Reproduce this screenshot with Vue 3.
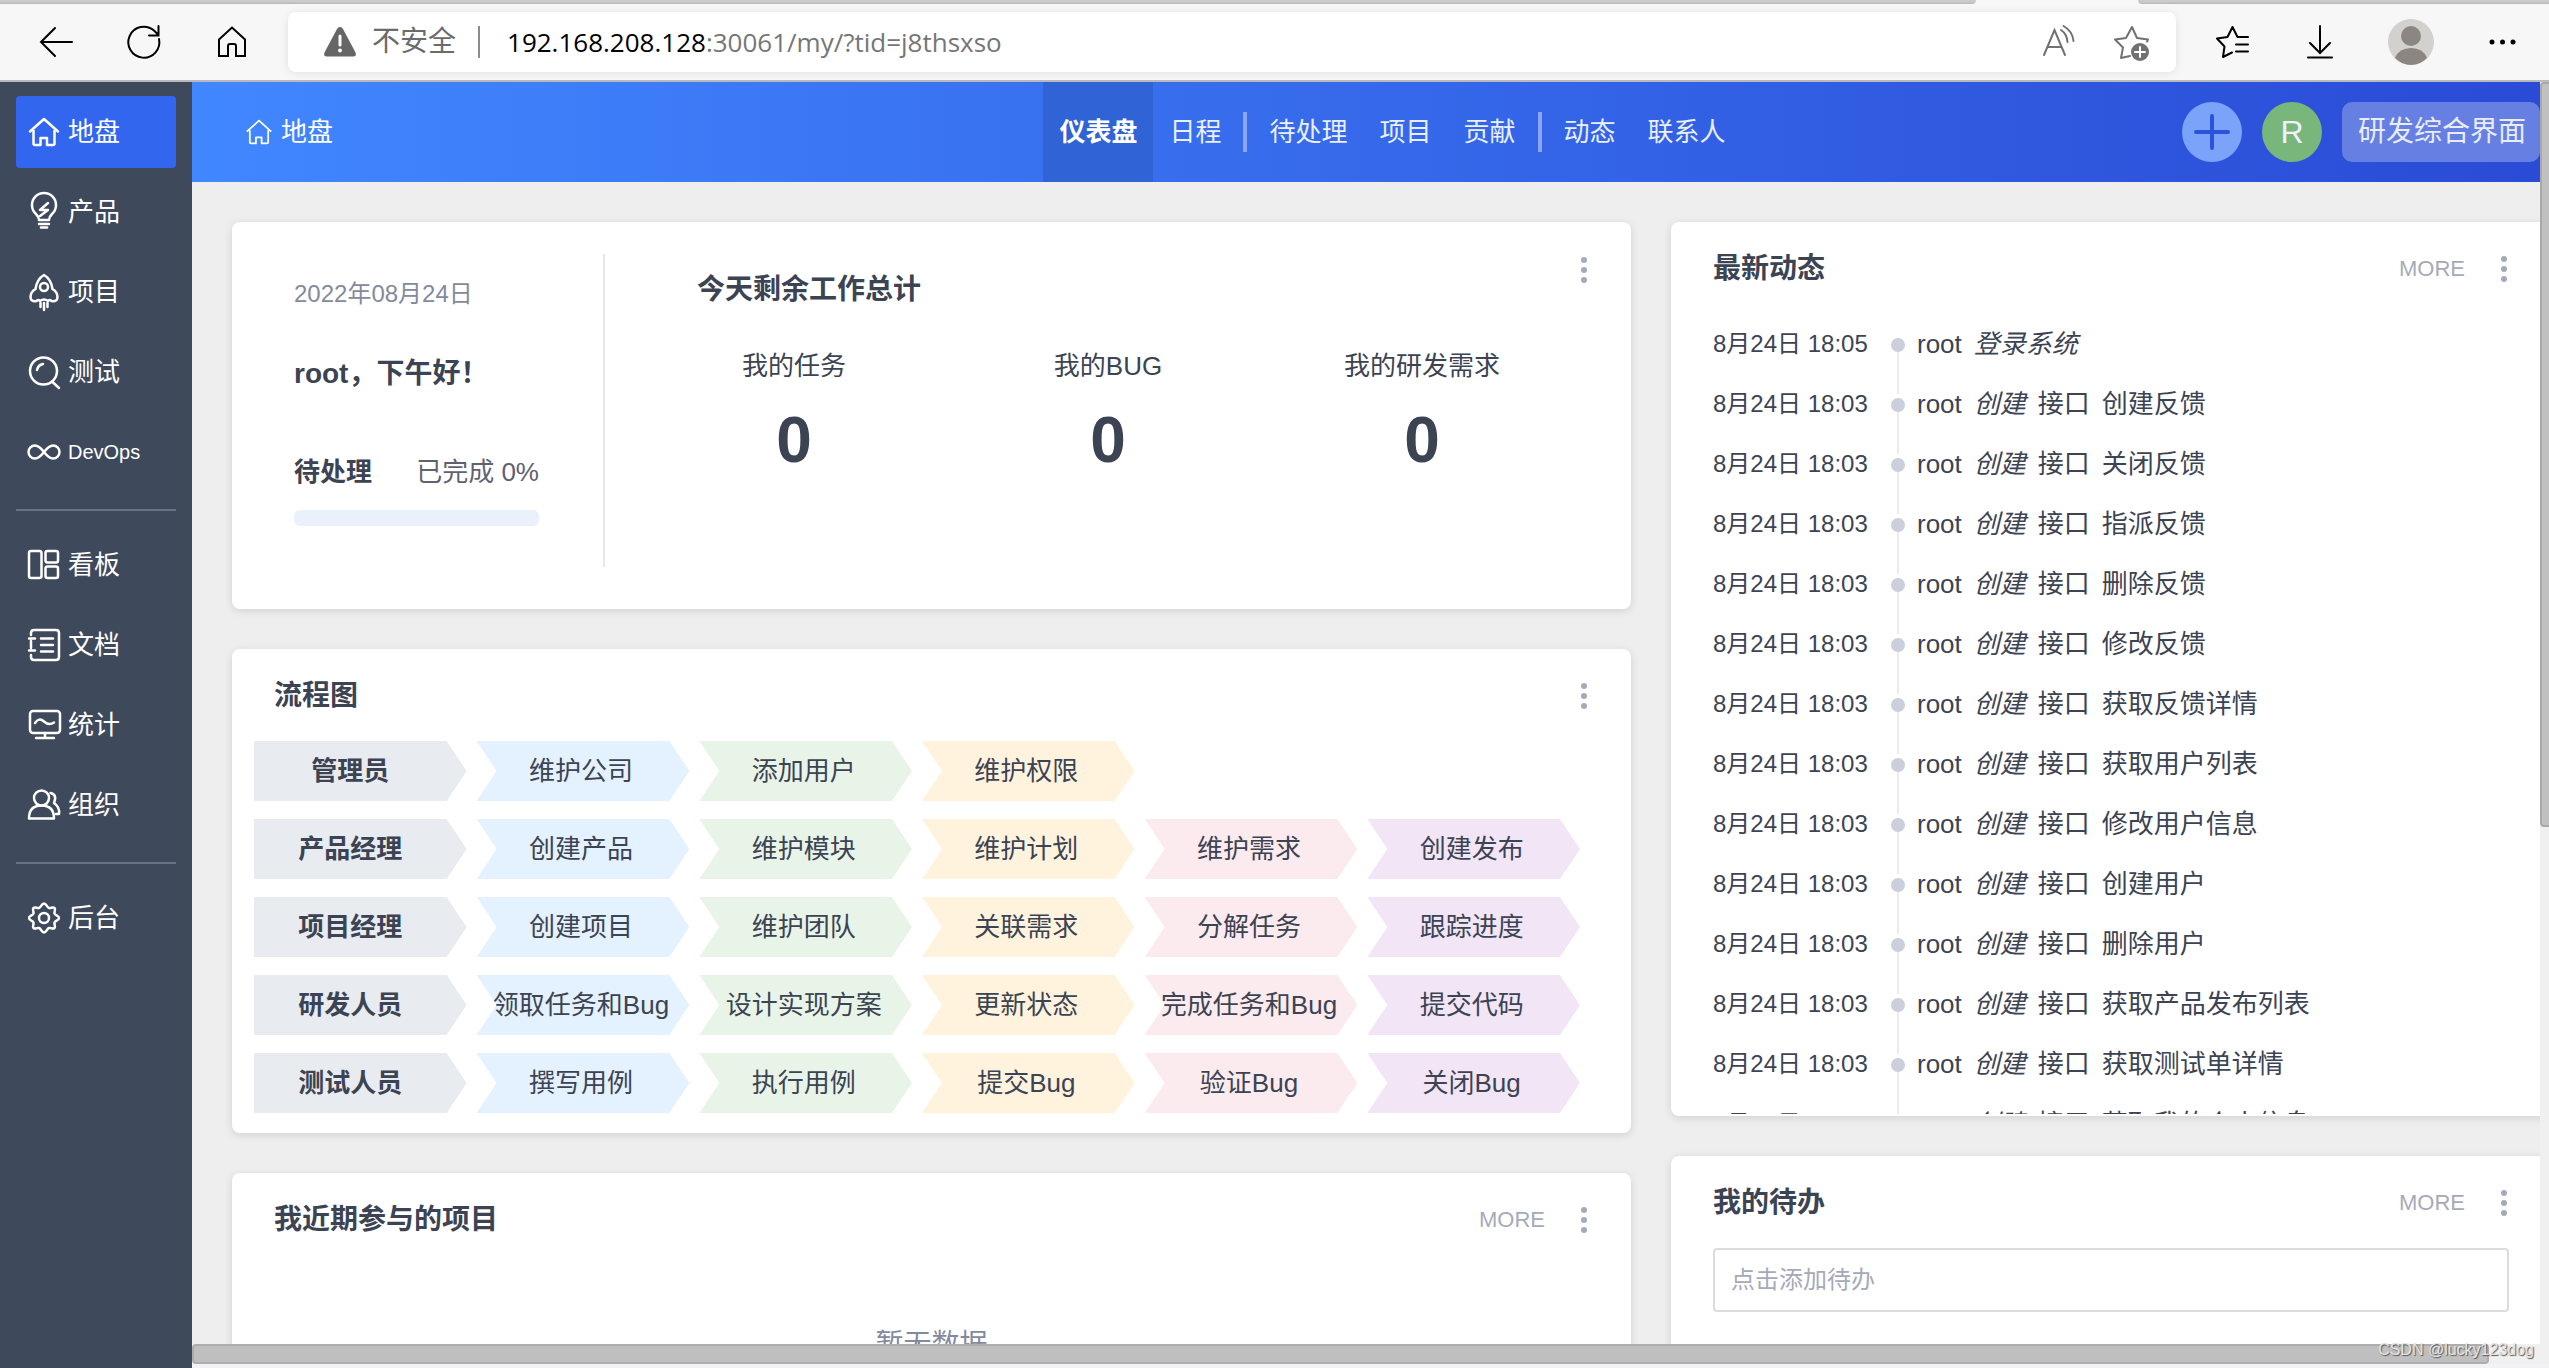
<script setup>
const primaryMenu = [
  { icon: 'home', label: '地盘', active: true },
  { icon: 'bulb', label: '产品' },
  { icon: 'rocket', label: '项目' },
  { icon: 'search', label: '测试' },
  { icon: 'infinity', label: 'DevOps', narrow: true },
]
const secondaryMenu = [
  { icon: 'kanban', label: '看板' },
  { icon: 'doc', label: '文档' },
  { icon: 'chart', label: '统计' },
  { icon: 'people', label: '组织' },
]
const adminMenu = [{ icon: 'gear', label: '后台' }]
const menuGroups = [primaryMenu, secondaryMenu, adminMenu]

const tabGroups = [
  ['仪表盘', '日程'],
  ['待处理', '项目', '贡献'],
  ['动态', '联系人'],
]

const stats = [
  { label: '我的任务', value: 0 },
  { label: '我的BUG', value: 0 },
  { label: '我的研发需求', value: 0 },
]

const flows = [
  { role: '管理员', steps: ['维护公司', '添加用户', '维护权限'] },
  { role: '产品经理', steps: ['创建产品', '维护模块', '维护计划', '维护需求', '创建发布'] },
  { role: '项目经理', steps: ['创建项目', '维护团队', '关联需求', '分解任务', '跟踪进度'] },
  { role: '研发人员', steps: ['领取任务和Bug', '设计实现方案', '更新状态', '完成任务和Bug', '提交代码'] },
  { role: '测试人员', steps: ['撰写用例', '执行用例', '提交Bug', '验证Bug', '关闭Bug'] },
]

const created = [
  '创建反馈', '关闭反馈', '指派反馈', '删除反馈', '修改反馈', '获取反馈详情', '获取用户列表',
  '修改用户信息', '创建用户', '删除用户', '获取产品发布列表', '获取测试单详情', '获取我的个人信息',
]
const feed = [
  { time: '8月24日 18:05', action: '登录系统' },
  ...created.map((target) => ({ time: '8月24日 18:03', action: '创建', type: '接口', target })),
]
</script>

<template>
  <div class="window">
    <div class="tabstrip"><i class="tab-left"></i><i></i><i class="tab-right"></i></div>

    <header class="toolbar">
      <div class="tools">
        <button class="tool" aria-label="后退">
          <svg viewBox="0 0 40 40"><path d="M36 20H5M19 6 5 20l14 14" /></svg>
        </button>
        <button class="tool" aria-label="刷新">
          <svg viewBox="0 0 40 40"><path d="M35 17a15.500 15.500 0 1 1-5-8.500l4 4M34.500 4v9.500H25" /></svg>
        </button>
        <button class="tool" aria-label="主页">
          <svg viewBox="0 0 40 40"><path d="M7 17.500 20 5.500l13 12V34h-9V24q0-2-2-2h-4q-2 0-2 2v10H7z" /></svg>
        </button>
      </div>
      <div class="address">
        <svg class="warn" viewBox="0 0 32 30"><path d="M16 0q2 0 3 2l12.500 23.500Q33 29.500 29 29.500H3q-4 0-2.500-4L13 2q1-2 3-2z" fill="#666" /><path d="M16 9v9" stroke="#fff" stroke-width="3" stroke-linecap="round" /><circle cx="16" cy="23.500" r="2" fill="#fff" /></svg>
        <span class="insecure">不安全</span>
        <i class="bar"></i>
        <span class="url"><b>192.168.208.128</b>:30061/my/?tid=j8thsxso</span>
        <button class="tool grey" aria-label="朗读">
          <svg viewBox="0 0 40 40"><path d="M4 33 14.500 8 25 33M7.500 25h14M21 8q6 4 6.500 12M23.500 4q9 5 10 15" /></svg>
        </button>
        <button class="tool grey" aria-label="收藏">
          <svg viewBox="0 0 40 40"><path d="M18 34l-9 2 2-10.500-8-8 11-1.500 6-11 5 11 11 1.500-1 2" stroke-linejoin="round" /><circle cx="28" cy="30" r="9" fill="#717171" stroke="none" /><path d="M28 25v10M23 30h10" stroke="#fff" /></svg>
        </button>
      </div>
      <div class="tools">
        <button class="tool" aria-label="收藏夹">
          <svg viewBox="0 0 40 40"><path d="M20 30.500 11 35l1.500-10.500-7.500-8L15.500 15 20.500 5l5 10H36M24 22.500h12M24 29.500h12" stroke-linejoin="round" /></svg>
        </button>
        <button class="tool" aria-label="下载">
          <svg viewBox="0 0 40 40"><path d="M20 4v26M10 21l10 10 10-10M8 35.500h24" /></svg>
        </button>
        <button class="avatar" aria-label="用户">
          <svg viewBox="0 0 46 46"><circle cx="23" cy="23" r="23" fill="#d3d1cd" /><circle cx="23" cy="17" r="10" fill="#8b8682" /><path d="M7 39q4-10 16-10t16 10q-7 7-16 7T7 39z" fill="#8b8682" /></svg>
        </button>
        <button class="tool" aria-label="更多">
          <svg viewBox="0 0 40 40"><g fill="#000" stroke="none"><circle cx="10" cy="20" r="2.500" /><circle cx="20.500" cy="20" r="2.500" /><circle cx="31" cy="20" r="2.500" /></g></svg>
        </button>
      </div>
    </header>

    <div class="body">
      <aside class="sidebar">
        <nav v-for="(group, g) in menuGroups" :key="g" class="menu">
          <a v-for="item in group" :key="item.label" href="#" class="menu-item" :class="{ active: item.active }">
            <svg class="menu-icon" viewBox="0 0 32 32">
              <path v-if="item.icon === 'home'" d="M2 15.500 16 3l14 12.500M5.500 14v13.500q0 1.500 1.500 1.500h5.500v-7h6.500v7H25q1.500 0 1.500-1.500V14" />
              <g v-else-if="item.icon === 'bulb'">
                <path d="M11 24q0-3-3-6a12 12 0 1 1 16 0q-3 3-3 6zM11 28h10" />
                <path d="M13 31.500h6" />
                <path d="m20 7-8 7h8l-8 6" />
              </g>
              <g v-else-if="item.icon === 'rocket'">
                <path d="M8.500 25q-6 1-6-4 0-5 5-8Q9 3 16-1q7 4 8.500 14 5 3 5 8 0 5-6 4-2-2-3.500 0-2-1.500-4-1.500t-4 1.500q-1.500-2-3.500 0z" />
                <circle cx="16" cy="11" r="4" />
                <path d="M12.500 27v4M16 27v7M19.500 27v4" />
              </g>
              <g v-else-if="item.icon === 'search'">
                <circle cx="15.500" cy="15" r="13.500" />
                <path d="M24 25.500 31 32M9 14q1-5 6-6" />
              </g>
              <path v-else-if="item.icon === 'infinity'" d="M16 16Q11 9.500 7 9.500a6.500 6.500 0 0 0 0 13Q11 22.500 16 16t9-6.500a6.500 6.500 0 0 1 0 13Q21 22.500 16 16z" />
              <g v-else-if="item.icon === 'kanban'">
                <rect x="1" y="2" width="12.500" height="27" rx="2" />
                <rect x="17.500" y="2" width="12.500" height="11.500" rx="2" />
                <rect x="17.500" y="17.500" width="12.500" height="11.500" rx="2" />
              </g>
              <g v-else-if="item.icon === 'doc'">
                <path d="M3 6V4q0-3 3-3h22q3 0 3 3v24q0 3-3 3H6q-3 0-3-3v-2M3 12v7M1 9.500h6M1 21.500h6M13 9.500h12M13 16h12M13 22.500h12" />
              </g>
              <g v-else-if="item.icon === 'chart'">
                <rect x="2" y="2" width="30" height="22" rx="3" />
                <path d="M7 14q4-6 9-1.500t10 1M17 24v4M8 29h18" />
              </g>
              <g v-else-if="item.icon === 'people'">
                <circle cx="13.500" cy="9" r="7.500" />
                <path d="M1 29.500q0-13 12.500-13T26 29.500zM22.500 4q7 1.500 3.500 10 6 4 5 11h-3" />
              </g>
              <g v-else>
                <path d="M16 1.500c2.500 0 3 4 5 4.500s4-1.500 5.500 0-.5 3.500 0 5.500 4.500 2 4.500 4.500-4 2.500-4.500 4.500 1.500 4 0 5.500-3.500-.5-5.500 0-2.500 4.500-5 4.500-3-4-5-4.500-4 1.500-5.500 0 .5-3.500 0-5.500S1 18.500 1 16s4-2.500 4.500-4.500-1.500-4 0-5.500 3.500.5 5.500 0 2.500-4.500 5-4.500z" />
                <circle cx="16" cy="16" r="5" />
              </g>
            </svg>
            <span :class="{ narrow: item.narrow }">{{ item.label }}</span>
          </a>
        </nav>
      </aside>

      <div class="frame">
        <div class="viewport">
          <div class="page">
            <div class="topbar">
              <div class="topbar-side">
                <a href="#" class="crumb">
                  <svg viewBox="0 0 32 32"><path d="M2 15.500 16 3l14 12.500M5.500 14v13.500q0 1.500 1.500 1.500h5.500v-7h6.500v7H25q1.500 0 1.500-1.500V14" /></svg>地盘
                </a>
              </div>
              <nav class="tabs">
                <div v-for="(group, g) in tabGroups" :key="g" class="tab-group">
                  <a v-for="tab in group" :key="tab" href="#" :class="{ current: tab === '仪表盘' }">{{ tab }}</a>
                </div>
              </nav>
              <div class="topbar-side actions">
                <button class="round plus" aria-label="添加">
                  <svg viewBox="0 0 60 60"><path d="M30 14v32M14 30h32" /></svg>
                </button>
                <button class="round user">R</button>
                <button class="mode">研发综合界面</button>
              </div>
            </div>

            <main class="board">
              <div class="column">
                <section class="card welcome">
                  <div class="greeting">
                    <time>2022年08月24日</time>
                    <h2>root，下午好！</h2>
                    <p><b>待处理</b><span>已完成 0%</span></p>
                    <div class="progress"></div>
                  </div>
                  <div class="summary">
                    <div class="summary-head">
                      <h2>今天剩余工作总计</h2>
                      <button class="dots" aria-label="菜单"><i></i><i></i><i></i></button>
                    </div>
                    <div class="stats">
                      <div v-for="s in stats" :key="s.label">
                        <span>{{ s.label }}</span>
                        <strong>{{ s.value }}</strong>
                      </div>
                    </div>
                  </div>
                </section>

                <section class="card">
                  <div class="card-head">
                    <h2>流程图</h2>
                    <button class="dots" aria-label="菜单"><i></i><i></i><i></i></button>
                  </div>
                  <div class="flow">
                    <div v-for="row in flows" :key="row.role" class="flow-row">
                      <b class="step role">{{ row.role }}</b>
                      <a v-for="(step, i) in row.steps" :key="step" href="#" class="step" :class="'tone-' + i">{{ step }}</a>
                    </div>
                  </div>
                </section>

                <section class="card">
                  <div class="card-head">
                    <h2>我近期参与的项目</h2>
                    <a href="#" class="more">MORE</a>
                    <button class="dots" aria-label="菜单"><i></i><i></i><i></i></button>
                  </div>
                  <p class="empty">暂无数据</p>
                </section>
              </div>

              <div class="column">
                <section class="card">
                  <div class="card-head">
                    <h2>最新动态</h2>
                    <a href="#" class="more">MORE</a>
                    <button class="dots" aria-label="菜单"><i></i><i></i><i></i></button>
                  </div>
                  <ul class="feed">
                    <li v-for="(f, i) in feed" :key="i">
                      <time>{{ f.time }}</time>
                      <i class="node"></i>
                      <span>root</span>
                      <em>{{ f.action }}</em>
                      <span v-if="f.type">{{ f.type }}</span>
                      <a v-if="f.target" href="#">{{ f.target }}</a>
                    </li>
                  </ul>
                </section>

                <section class="card">
                  <div class="card-head">
                    <h2>我的待办</h2>
                    <a href="#" class="more">MORE</a>
                    <button class="dots" aria-label="菜单"><i></i><i></i><i></i></button>
                  </div>
                  <div class="todo">
                    <input type="text" placeholder="点击添加待办" aria-label="添加待办" />
                  </div>
                </section>
              </div>
            </main>
          </div>
          <div class="vscroll"><i></i></div>
        </div>
        <div class="hscroll"><i></i></div>
      </div>
    </div>
    <span class="watermark">CSDN @lucky123dog</span>
  </div>
</template>

<style>
html,
body {
  margin: 0;
  overflow: hidden;
}
</style>

<style scoped>
* {
  box-sizing: border-box;
}
.window {
  position: relative;
  display: flex;
  flex-direction: column;
  height: 100vh;
  overflow: hidden;
  font-family: "Liberation Sans", "Noto Sans CJK SC", sans-serif;
  font-size: 26px;
  line-height: 40px;
  color: #3c4353;
  background: #f7f7f7;
}
a {
  color: inherit;
  text-decoration: none;
}
button {
  padding: 0;
  border: 0;
  background: none;
  font: inherit;
  color: inherit;
}
h2,
p,
ul {
  margin: 0;
  padding: 0;
}
h2 {
  font-size: 28px;
  font-weight: 700;
}
svg {
  display: block;
  overflow: visible;
  fill: none;
}

/* browser chrome */
.tabstrip {
  display: grid;
  grid-template-columns: 1976fr 162fr 411fr;
  height: 4px;
  flex: none;
}
.tab-left,
.tab-right {
  background: linear-gradient(#cbcbcb 50%, #b4b4b4);
}
.tab-left {
  border-bottom-right-radius: 4px;
}
.tab-right {
  border-bottom-left-radius: 4px;
}
.toolbar {
  display: flex;
  align-items: center;
  flex: none;
  gap: 36px;
  height: 78px;
  padding: 0 27px 0 36px;
  border-bottom: 2px solid #b9babd;
}
.tools {
  display: flex;
  align-items: center;
  gap: 48px;
}
.tool {
  width: 40px;
  height: 40px;
}
.tool svg {
  stroke: #000;
  stroke-width: 2;
  stroke-linecap: round;
}
.tool.grey svg {
  stroke: #717171;
}
.avatar {
  width: 46px;
  height: 46px;
}
.address {
  display: flex;
  align-items: center;
  flex: 1;
  height: 60px;
  padding: 0 24px 0 36px;
  border-radius: 8px;
  background: #fff;
  box-shadow: 0 1px 10px rgba(0, 0, 0, 0.09);
}
.warn {
  width: 32px;
  height: 30px;
}
.insecure {
  margin: 0 22px 0 16px;
  font-size: 28px;
  color: #6b6b6b;
}
.bar {
  width: 2px;
  height: 32px;
  background: #8c8c8c;
}
.url {
  flex: 1;
  margin-left: 27px;
  font-family: "Open Sans", sans-serif;
  font-size: 26px;
  color: #767676;
}
.url b {
  font-weight: 400;
  color: #000;
}
.address .tool + .tool {
  margin-left: 32px;
}

/* sidebar */
.body {
  display: flex;
  flex: 1;
  min-height: 0;
}
.sidebar {
  flex: none;
  width: 192px;
  padding: 14px 16px;
  background: #3f495c;
}
.menu {
  display: grid;
  gap: 8px;
}
.menu + .menu {
  margin-top: 21px;
  padding-top: 18px;
  border-top: 2px solid #6b7382;
}
.menu-item {
  display: flex;
  align-items: center;
  gap: 8px;
  height: 72px;
  padding-left: 12px;
  border-radius: 4px;
  color: #fff;
}
.menu-item.active {
  background: #3366ee;
}
.menu-icon {
  width: 32px;
  height: 32px;
  stroke: #fff;
  stroke-width: 2.5;
  stroke-linecap: round;
  stroke-linejoin: round;
}
.narrow {
  font-size: 20px;
}

/* page frame */
.frame {
  display: flex;
  flex-direction: column;
  flex: 1;
  min-width: 0;
  padding-bottom: 4px;
  background: #f1f1f6;
}
.viewport {
  display: flex;
  flex: 1;
  min-height: 0;
}
.page {
  flex: 1;
  min-width: 0;
  overflow: hidden;
  background: #eee;
}
.vscroll {
  flex: none;
  width: 9px;
  background: #f0f0f0;
}
.vscroll i {
  display: block;
  height: 59%;
  border: 2px solid #a9a9a9;
  border-right: 0;
  border-radius: 4px 0 0 4px;
  background: #c0c0c0;
}
.hscroll {
  display: flex;
  flex: none;
  height: 20px;
  padding-right: 60px;
  background: #f0f0f0;
}
.hscroll i {
  flex: 1;
  border: 2px solid #adadad;
  border-radius: 4px;
  background: #bfbfbf;
}

/* top bar */
.topbar {
  display: flex;
  align-items: center;
  height: 100px;
  color: #fff;
  background: linear-gradient(90deg, #4187ff, #2a4bd6);
}
.topbar-side {
  display: flex;
  align-items: center;
  flex: 852 1 0;
}
.crumb {
  display: flex;
  align-items: center;
  gap: 8px;
  padding-left: 53px;
}
.crumb svg {
  width: 28px;
  height: 28px;
  stroke: #fff;
  stroke-width: 2;
  stroke-linejoin: round;
}
.tabs {
  display: flex;
  align-items: center;
}
.tab-group {
  display: flex;
  align-items: center;
}
.tab-group + .tab-group::before {
  content: "";
  width: 4px;
  height: 40px;
  margin: 0 6px;
  background: #8aa6f4;
}
.tab-group a {
  padding: 0 16px;
  line-height: 100px;
  color: #e9effd;
}
.tab-group a.current {
  font-weight: 700;
  color: #fff;
  background: #3063d6;
}
.actions {
  flex-grow: 799;
  justify-content: flex-end;
  gap: 20px;
}
.round {
  width: 60px;
  height: 60px;
  border-radius: 50%;
}
.plus {
  background: #7ba3f9;
}
.plus svg {
  stroke: #2b52da;
  stroke-width: 4;
  stroke-linecap: round;
}
.user {
  font-size: 32px;
  color: #eef2fd;
  background: #79b67b;
}
.mode {
  height: 60px;
  padding: 0 14px 0 16px;
  border-radius: 10px;
  font-size: 28px;
  color: #e8ecfb;
  background: #667fe2;
}

/* dashboard */
.board {
  display: grid;
  grid-template-columns: 1399fr 880fr;
  gap: 40px;
  align-items: start;
  margin-right: -11px;
  padding: 40px 0 0 40px;
}
.column {
  display: grid;
  gap: 40px;
  min-width: 0;
}
.card {
  border-radius: 8px;
  background: #fff;
  box-shadow: 0 2px 8px rgba(0, 0, 0, 0.12);
}
.card-head {
  display: flex;
  align-items: center;
  height: 92px;
  padding: 2px 32px 0 42px;
}
.card-head h2 {
  flex: 1;
}
.more {
  margin-right: 24px;
  font-size: 22px;
  color: #a6aab8;
}
.dots {
  display: flex;
  flex-direction: column;
  align-items: center;
  justify-content: center;
  gap: 4px;
  width: 30px;
  height: 40px;
}
.dots i {
  width: 6px;
  height: 6px;
  border-radius: 50%;
  background: #a6aab8;
}

.welcome {
  display: flex;
  padding: 32px 32px 42px 0;
}
.greeting {
  flex: none;
  width: 373px;
  padding: 20px 64px 41px 62px;
  border-right: 2px solid #e4e7ee;
}
.greeting time {
  display: block;
  font-size: 24px;
  color: #838a9d;
}
.greeting h2 {
  margin: 40px 0 58px;
  white-space: nowrap;
}
.greeting p {
  display: flex;
  justify-content: space-between;
}
.greeting p span {
  color: #5e6270;
}
.progress {
  height: 16px;
  margin-top: 18px;
  border-radius: 6px;
  background: #eaf1fc;
}
.summary {
  flex: 1;
  padding-left: 32px;
}
.summary-head {
  display: flex;
  justify-content: space-between;
  height: 72px;
  padding-left: 60px;
}
.summary-head h2 {
  padding-top: 16px;
}
.summary-head .dots {
  height: 32px;
}
.stats {
  display: grid;
  grid-template-columns: repeat(3, 1fr);
  margin-right: 20px;
  padding-top: 20px;
  text-align: center;
}
.stats span,
.stats strong {
  display: block;
}
.stats strong {
  font-size: 64px;
  line-height: 72px;
  margin-top: 18px;
}

.flow {
  display: grid;
  gap: 18px;
  padding: 0 51px 20px 22px;
}
.flow-row {
  display: grid;
  grid-template-columns: repeat(6, 1fr);
  gap: 10px;
}
.step {
  padding-right: 4px;
  line-height: 60px;
  text-align: center;
  white-space: nowrap;
  clip-path: polygon(0 0, calc(100% - 20px) 0, 100% 50%, calc(100% - 20px) 100%, 0 100%, 20px 50%);
}
.role {
  padding-right: 20px;
  background: #e8ebf0;
  clip-path: polygon(0 0, calc(100% - 20px) 0, 100% 50%, calc(100% - 20px) 100%, 0 100%);
}
.tone-0 {
  background: #e4f1fe;
}
.tone-1 {
  background: #e9f4e8;
}
.tone-2 {
  background: #fff3de;
}
.tone-3 {
  background: #fbebee;
}
.tone-4 {
  background: #f1e5f6;
}
.empty {
  padding: 60px 0;
  text-align: center;
  font-size: 28px;
  color: #838a9d;
}

.feed {
  height: 800px;
  margin-bottom: 2px;
  padding-left: 42px;
  overflow: hidden;
  list-style: none;
}
.feed li {
  display: flex;
  align-items: center;
  gap: 12px;
  height: 60px;
  white-space: nowrap;
}
.feed time {
  width: 166px;
  font-size: 24px;
}
.node {
  display: flex;
  flex-direction: column;
  align-items: center;
  align-self: stretch;
  width: 14px;
  padding-top: 24px;
}
.node::before {
  content: "";
  flex: none;
  width: 14px;
  height: 14px;
  border-radius: 50%;
  background: #cbcfdc;
}
.node::after {
  content: "";
  flex: none;
  width: 2px;
  height: 42px;
  background: #ebebef;
}

.todo {
  padding: 0 42px 60px;
}
.todo input {
  display: block;
  width: 100%;
  height: 64px;
  padding: 0 16px;
  border: 2px solid #dcdcdc;
  border-radius: 4px;
  font: inherit;
  font-size: 24px;
  background: #fff;
}
.todo input::placeholder {
  color: #a6aab8;
  opacity: 1;
}
.watermark {
  position: absolute;
  right: 15px;
  bottom: 6px;
  font-size: 16px;
  line-height: 24px;
  color: #e4e4e4;
  text-shadow: 1px 1px 1px #555;
}
</style>
